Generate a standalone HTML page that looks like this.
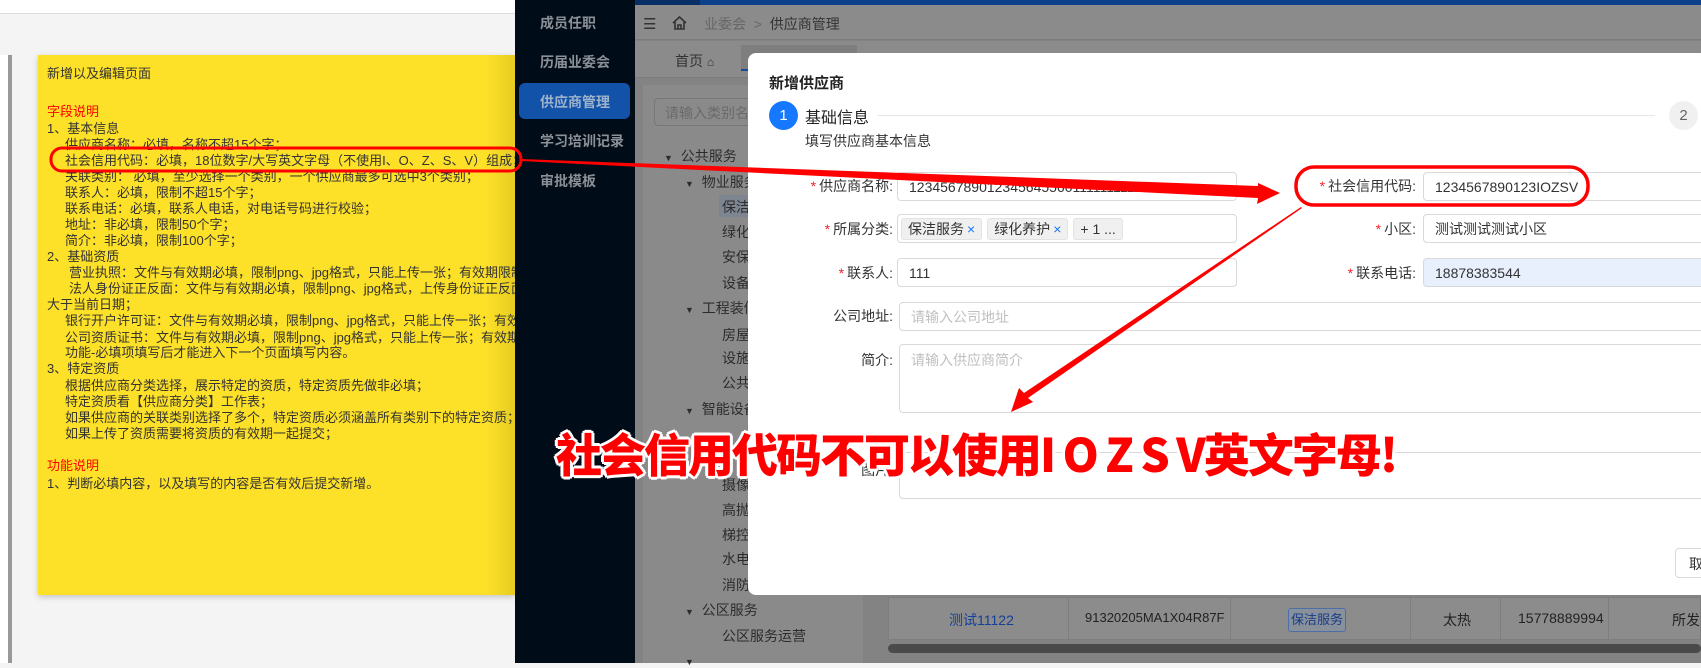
<!DOCTYPE html>
<html><head><meta charset="utf-8">
<style>
*{margin:0;padding:0;box-sizing:border-box}
body{width:1701px;height:663px;overflow:hidden;position:relative;background:#f4f4f4;font-family:"Liberation Sans","Noto Sans CJK SC",sans-serif;color:#333}
.a{position:absolute;white-space:nowrap}
.y{font-size:13px;line-height:16px;color:#333}
.sb{color:#8c9096;font-size:14px;font-weight:bold}
.g{background:#8b8b8b}
.tr{font-size:14px;color:#2c2c2c}
.lab{font-size:14px;color:#333;text-align:right}
.lab b{color:#f5222d;font-weight:normal;margin-right:3px}
.inp{border:1px solid #d9d9d9;border-radius:4px;background:#fff;font-size:14px;padding-left:11px;display:flex;align-items:center}
.ph{color:#bfbfbf}
.tag{background:#f0f0f0;border:1px solid #e3e3e3;border-radius:3px;font-size:14px;padding:0 6px;height:22px;line-height:20px;display:inline-block;margin-right:5px}
.tag i{color:#1677ff;font-style:normal;margin-left:3px}
</style></head><body>
<div class="a" style="left:0;top:0;width:515px;height:14px;background:#fff;border-bottom:1px solid #ddd"></div>
<div class="a" style="left:0;top:55px;width:9px;height:608px;background:#fff"></div>
<div class="a" style="left:8px;top:55px;width:4px;height:608px;background:#999"></div>
<div class="a" style="left:38px;top:55px;width:477px;height:540px;background:linear-gradient(90deg,#fde028 0,#fde028 94%,#e6cc22 100%);box-shadow:0 2px 6px rgba(0,0,0,.2)"></div>
<div class="a y" style="left:47px;top:66px">新增以及编辑页面</div>
<div class="a y" style="left:47px;top:104px;color:#f00">字段说明</div>
<div class="a y" style="left:47px;top:121px">1、基本信息</div>
<div class="a y" style="left:65px;top:137px">供应商名称：必填，名称不超15个字；</div>
<div class="a y" style="left:65px;top:153px">社会信用代码：必填，18位数字/大写英文字母（不使用I、O、Z、S、V）组成；</div>
<div class="a y" style="left:65px;top:169px">关联类别：&nbsp;必填，至少选择一个类别，一个供应商最多可选中3个类别；</div>
<div class="a y" style="left:65px;top:185px">联系人：必填，限制不超15个字；</div>
<div class="a y" style="left:65px;top:201px">联系电话：必填，联系人电话，对电话号码进行校验；</div>
<div class="a y" style="left:65px;top:217px">地址：非必填，限制50个字；</div>
<div class="a y" style="left:65px;top:233px">简介：非必填，限制100个字；</div>
<div class="a y" style="left:47px;top:249px">2、基础资质</div>
<div class="a y" style="left:69px;top:265px">营业执照：文件与有效期必填，限制png、jpg格式，只能上传一张；有效期限制</div>
<div class="a y" style="left:69px;top:281px">法人身份证正反面：文件与有效期必填，限制png、jpg格式，上传身份证正反面</div>
<div class="a y" style="left:47px;top:297px">大于当前日期；</div>
<div class="a y" style="left:65px;top:313px">银行开户许可证：文件与有效期必填，限制png、jpg格式，只能上传一张；有效期</div>
<div class="a y" style="left:65px;top:330px">公司资质证书：文件与有效期必填，限制png、jpg格式，只能上传一张；有效期限</div>
<div class="a y" style="left:65px;top:345px">功能-必填项填写后才能进入下一个页面填写内容。</div>
<div class="a y" style="left:47px;top:361px">3、特定资质</div>
<div class="a y" style="left:65px;top:378px">根据供应商分类选择，展示特定的资质，特定资质先做非必填；</div>
<div class="a y" style="left:65px;top:394px">特定资质看【供应商分类】工作表；</div>
<div class="a y" style="left:65px;top:410px">如果供应商的关联类别选择了多个，特定资质必须涵盖所有类别下的特定资质；</div>
<div class="a y" style="left:65px;top:426px">如果上传了资质需要将资质的有效期一起提交；</div>
<div class="a y" style="left:47px;top:458px;color:#f00">功能说明</div>
<div class="a y" style="left:47px;top:476px">1、判断必填内容，以及填写的内容是否有效后提交新增。</div>
<div class="a" style="left:515px;top:0;width:120px;height:663px;background:#000c17"></div>
<div class="a" style="left:519px;top:83px;width:111px;height:36px;background:#1252a8;border-radius:6px"></div>
<div class="a sb" style="left:540px;top:13px">成员任职</div>
<div class="a sb" style="left:540px;top:52px">历届业委会</div>
<div class="a sb" style="left:540px;top:92px;color:#9fb2cc">供应商管理</div>
<div class="a sb" style="left:540px;top:131px">学习培训记录</div>
<div class="a sb" style="left:540px;top:171px">审批模板</div>
<div class="a" style="left:635px;top:0;width:1066px;height:663px;background:#838383"></div>
<div class="a" style="left:635px;top:0;width:1066px;height:5px;background:#0c3f8c"></div>
<div class="a" style="left:635px;top:0;width:65px;height:5px;background:#082e66"></div>
<div class="a g" style="left:635px;top:5px;width:1066px;height:35px;border-bottom:1px solid #7c7c7c"></div>
<div class="a" style="left:643px;top:15px;font-size:15px;color:#333">☰</div>
<svg class="a" style="left:671px;top:15px" width="17" height="16" viewBox="0 0 17 16"><path d="M2 8 L8.5 2 L15 8 M4 7 V14 H13 V7 M7 14 V10 H10 V14" fill="none" stroke="#333" stroke-width="1.6"/></svg>
<div class="a" style="left:704px;top:14px;font-size:14px;color:#666">业委会&nbsp;&nbsp;&gt;&nbsp;&nbsp;<span style="color:#333">供应商管理</span></div>
<div class="a g" style="left:635px;top:41px;width:1066px;height:37px;border-bottom:1px solid #7c7c7c"></div>
<div class="a" style="left:675px;top:51px;font-size:14px;color:#333">首页 <span style="font-size:12px">⌂</span></div>
<div class="a" style="left:741px;top:45px;width:116px;height:26px;background:#7e7e7e;border-bottom:2px solid #134a9c"></div>
<div class="a" style="left:643px;top:85px;width:220px;height:578px;background:#8a8a8a"></div>
<div class="a" style="left:654px;top:98px;width:120px;height:28px;border:1px solid #777;border-radius:4px;font-size:14px;color:#6a6a6a;padding:4px 10px">请输入类别名称</div>
<div class="a" style="left:719px;top:195px;width:40px;height:22px;background:#7d8590"></div>
<div class="a tr" style="left:664px;top:146px"><span style="font-size:9px">▼</span>&nbsp;&nbsp;公共服务</div>
<div class="a tr" style="left:685px;top:172px"><span style="font-size:9px">▼</span>&nbsp;&nbsp;物业服务</div>
<div class="a tr" style="left:722px;top:197px">保洁</div>
<div class="a tr" style="left:722px;top:222px">绿化</div>
<div class="a tr" style="left:722px;top:247px">安保</div>
<div class="a tr" style="left:722px;top:273px">设备</div>
<div class="a tr" style="left:685px;top:298px"><span style="font-size:9px">▼</span>&nbsp;&nbsp;工程装修</div>
<div class="a tr" style="left:722px;top:325px">房屋</div>
<div class="a tr" style="left:722px;top:348px">设施</div>
<div class="a tr" style="left:722px;top:373px">公共</div>
<div class="a tr" style="left:685px;top:399px"><span style="font-size:9px">▼</span>&nbsp;&nbsp;智能设备</div>
<div class="a tr" style="left:722px;top:475px">摄像</div>
<div class="a tr" style="left:722px;top:500px">高抛</div>
<div class="a tr" style="left:722px;top:525px">梯控</div>
<div class="a tr" style="left:722px;top:549px">水电</div>
<div class="a tr" style="left:722px;top:575px">消防</div>
<div class="a tr" style="left:685px;top:600px"><span style="font-size:9px">▼</span>&nbsp;&nbsp;公区服务</div>
<div class="a tr" style="left:722px;top:626px">公区服务运营</div>
<div class="a tr" style="left:685px;top:652px"><span style="font-size:9px">▼</span></div>
<div class="a" style="left:888px;top:597px;width:813px;height:43px;background:#8c8c8c;border:1px solid #7e7e7e"></div>
<div class="a" style="left:1068px;top:597px;width:1px;height:43px;background:#7e7e7e"></div>
<div class="a" style="left:1230px;top:597px;width:1px;height:43px;background:#7e7e7e"></div>
<div class="a" style="left:1410px;top:597px;width:1px;height:43px;background:#7e7e7e"></div>
<div class="a" style="left:1500px;top:597px;width:1px;height:43px;background:#7e7e7e"></div>
<div class="a" style="left:1608px;top:597px;width:1px;height:43px;background:#7e7e7e"></div>
<div class="a" style="left:949px;top:610px;font-size:14px;color:#133f9a">测试11122</div>
<div class="a" style="left:1085px;top:610px;font-size:13px;color:#222">91320205MA1X04R87F</div>
<div class="a" style="left:1288px;top:608px;width:58px;height:24px;border:1px solid #4d6fa8;border-radius:3px;background:#88909c;font-size:13px;color:#1a3d85;text-align:center;line-height:22px">保洁服务</div>
<div class="a" style="left:1443px;top:610px;font-size:14px;color:#222">太热</div>
<div class="a" style="left:1518px;top:610px;font-size:14px;color:#222">15778889994</div>
<div class="a" style="left:1672px;top:610px;font-size:14px;color:#222">所发</div>
<div class="a" style="left:888px;top:644px;width:813px;height:9px;background:#4a4a4a;border-radius:5px"></div>
<div class="a" style="left:748px;top:53px;width:960px;height:542px;background:#fff;border-radius:8px"></div>
<div class="a" style="left:769px;top:72px;font-size:15px;font-weight:bold;color:#222">新增供应商</div>
<div class="a" style="left:769px;top:101px;width:29px;height:29px;border-radius:50%;background:#1677ff;color:#fff;font-size:15px;text-align:center;line-height:29px">1</div>
<div class="a" style="left:805px;top:104px;font-size:16px;color:#222">基础信息</div>
<div class="a" style="left:878px;top:115px;width:777px;height:1px;background:#e6e6e6"></div>
<div class="a" style="left:1669px;top:101px;width:29px;height:29px;border-radius:50%;background:#f0f0f0;color:#666;font-size:15px;text-align:center;line-height:29px">2</div>
<div class="a" style="left:805px;top:131px;font-size:14px;color:#333">填写供应商基本信息</div>
<div class="a lab" style="left:760px;width:133px;top:176px"><b>*</b>供应商名称:</div>
<div class="a inp" style="left:897px;top:172px;width:340px;height:29px">12345678901234564556011111111111</div>
<div class="a lab" style="left:1280px;width:136px;top:176px"><b>*</b>社会信用代码:</div>
<div class="a inp" style="left:1423px;top:172px;width:290px;height:29px">1234567890123IOZSV</div>
<div class="a lab" style="left:760px;width:133px;top:219px"><b>*</b>所属分类:</div>
<div class="a inp" style="left:897px;top:214px;width:340px;height:29px;padding-left:3px"><span class="tag">保洁服务<i>×</i></span><span class="tag">绿化养护<i>×</i></span><span class="tag">+ 1 ...</span></div>
<div class="a lab" style="left:1280px;width:136px;top:219px"><b>*</b>小区:</div>
<div class="a inp" style="left:1423px;top:214px;width:290px;height:29px">测试测试测试小区</div>
<div class="a lab" style="left:760px;width:133px;top:263px"><b>*</b>联系人:</div>
<div class="a inp" style="left:897px;top:258px;width:340px;height:29px">111</div>
<div class="a lab" style="left:1280px;width:136px;top:263px"><b>*</b>联系电话:</div>
<div class="a inp" style="left:1423px;top:258px;width:290px;height:29px;background:#e8f0fe">18878383544</div>
<div class="a lab" style="left:760px;width:133px;top:306px">公司地址:</div>
<div class="a inp" style="left:899px;top:302px;width:820px;height:29px"><span class="ph">请输入公司地址</span></div>
<div class="a lab" style="left:760px;width:133px;top:350px">简介:</div>
<div class="a inp" style="left:899px;top:344px;width:820px;height:69px;align-items:flex-start;padding-top:5px"><span class="ph">请输入供应商简介</span></div>
<div class="a lab" style="left:760px;width:133px;top:460px">图片:</div>
<div class="a inp" style="left:899px;top:452px;width:820px;height:47px"></div>
<div class="a" style="left:1675px;top:548px;width:40px;height:30px;border:1px solid #d9d9d9;border-radius:4px;font-size:14px;padding:5px 0 0 13px">取</div>
<svg class="a" style="left:0;top:0" width="1701" height="663">
<rect x="51" y="148" width="470" height="23" rx="11" fill="none" stroke="#f00" stroke-width="3"/>
<rect x="1296" y="167" width="292" height="38" rx="18" fill="none" stroke="#f00" stroke-width="3.5"/>
<polygon points="521,159 1258,186 1258,183 1280,193 1257,204 1258,198 521,161" fill="#f00"/>
<polygon points="1301,207 1024,393 1019,388 1011,412 1033,402 1028,398 1302,208" fill="#f00"/>
</svg>
<div class="a" style="left:556px;top:426px;font-size:46px;font-weight:900;color:#f00;font-family:'Noto Sans CJK SC',sans-serif;letter-spacing:-2px;text-shadow:2px 2px 0 #fff,-2px -2px 0 #fff,2px -2px 0 #fff,-2px 2px 0 #fff,0 3px 0 #fff,3px 0 0 #fff,-3px 0 0 #fff,0 -3px 0 #fff;line-height:54px">社会信用代码不可以使用I O Z S V英文字母!</div>
</body></html>
